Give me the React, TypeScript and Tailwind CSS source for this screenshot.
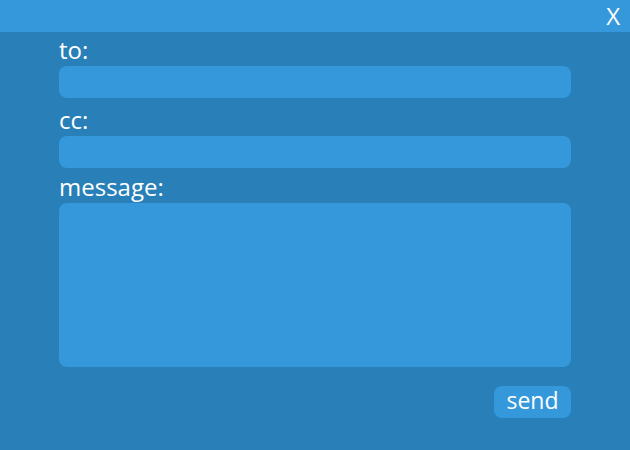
export default function App() {
  return (
    <div className="w-[630px] h-[450px] bg-[#2980b9] text-white font-['Open_Sans',sans-serif] overflow-hidden">
      <div className="h-8 bg-[#3498db] flex justify-end items-center pr-[10px]">
        <span className="text-[24px] leading-none">X</span>
      </div>
      <div className="w-[512px] mx-auto flex flex-col">
        <label className="text-[24px] leading-[30px] mt-[3px] mb-[1px]">to:</label>
        <div className="h-8 rounded-lg bg-[#3498db]" />
        <label className="text-[24px] leading-[30px] mt-[7px] mb-[1px]">cc:</label>
        <div className="h-8 rounded-lg bg-[#3498db]" />
        <label className="text-[24px] leading-[30px] mt-[4px] mb-[1px]">message:</label>
        <div className="h-[164px] rounded-lg bg-[#3498db]" />
        <div className="flex justify-end mt-[19px]">
          <button className="h-8 w-[77px] rounded-lg bg-[#3498db] text-[23px] leading-none pb-[4px]">send</button>
        </div>
      </div>
    </div>
  );
}
